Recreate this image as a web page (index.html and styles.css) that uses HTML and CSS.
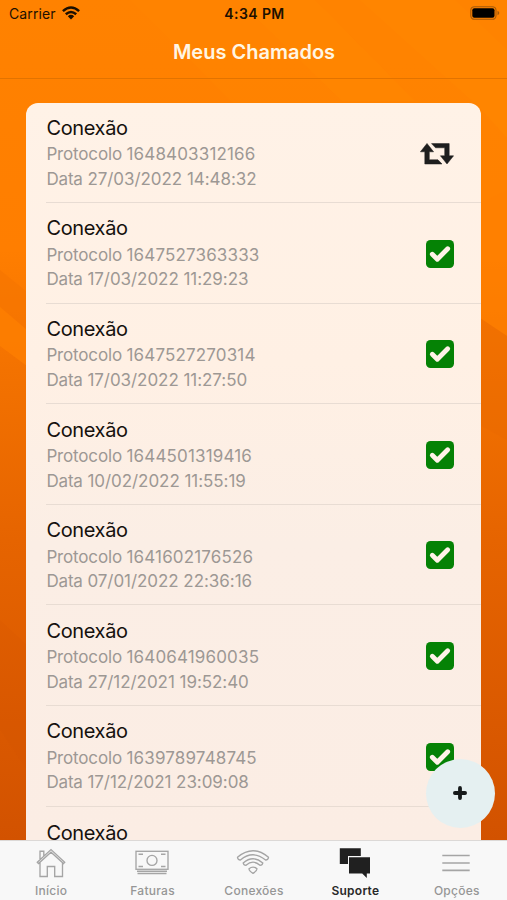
FILE: index.html
```html
<!DOCTYPE html>
<html lang="pt-BR">
<head>
<meta charset="utf-8">
<title>Meus Chamados</title>
<link rel="stylesheet" href="styles.css">
</head>
<body>
<svg width="0" height="0" class="defs">
  <symbol id="check" viewBox="0 0 28 28"><rect width="28" height="28" rx="4.5" fill="#058205"/><path d="M6.3 14.2l5 5 10.4-10.4" fill="none" stroke="#fff3e8" stroke-width="4.8" stroke-linecap="round" stroke-linejoin="round"/></symbol>
</svg>
<div class="app">
  <svg class="backdrop" viewBox="0 0 507 840">
    <path d="M130 0L390 260H507V0Z" fill="#ff8800" opacity=".35"/>
    <path d="M238 0L315 0L415 101H342Z" fill="#ff8a00" opacity=".4"/>
    <path d="M360 0H455L507 50V138L480 108Z" fill="#ff8a00" opacity=".4"/>
    <path d="M480 204L507 190V336L480 318Z" fill="#ff8000" opacity=".6"/>
    <path d="M0 270L27 292V366L0 346Z" fill="#f57500" opacity=".6"/>
    <path d="M0 307L27 330V366L0 346Z" fill="#ff8000" opacity=".7"/>
    <path d="M480 318L507 336V440L480 425Z" fill="#e96900" opacity=".4"/>
    <path d="M0 620L27 645V770L0 730Z" fill="#cf5200" opacity=".1"/>
  </svg>
  <header class="status">
    <div class="carrier">Carrier
      <svg width="18" height="14" viewBox="0 0 18 14" fill="none" stroke="#1c1000" stroke-width="2.5"><path d="M.9 5.1Q9-2.2 17.1 5.1M3.8 8.2Q9 3.7 14.2 8.2"/><path d="M5.8 10.2Q9 7.4 12.2 10.2L9 13.4Z" fill="#1c1000" stroke="none"/></svg>
    </div>
    <div class="clock">4:34 PM</div>
    <svg class="battery" width="30" height="14" viewBox="0 0 30 14"><rect x=".8" y=".7" width="25.2" height="12.6" rx="3.6" fill="none" stroke="#a65a0a" stroke-width="1.1"/><rect x="2.3" y="2.2" width="22.2" height="9.6" rx="2" fill="#000"/><path d="M27.5 4.8Q29.3 5.5 29.3 7T27.5 9.2Z" fill="#a65a0a"/></svg>
  </header>
  <h1 class="title"><span>Meus Chamados</span></h1>
  <main class="list">
    <article class="ticket"><div><h2>Conexão</h2><p>Protocolo <b>1648403312166</b></p><p>Data <i>27/03/2022 14:48:32</i></p></div>
      <svg class="retweet" width="34" height="22" viewBox="0 0 34 22" fill="#1e1e1e" stroke="#1e1e1e" stroke-width=".5" stroke-linejoin="round"><path d="M7 .4L13.6 8.8H9.3V16.8H18L22 21H4.8V8.8H.4Z"/><path d="M27 21L20.4 12.8H24.7V4.8H15.5L11.5 .6H29.2V12.8H33.6Z"/></svg></article>
    <article class="ticket"><div><h2>Conexão</h2><p>Protocolo <b>1647527363333</b></p><p>Data <i>17/03/2022 11:29:23</i></p></div><svg class="check"><use href="#check"/></svg></article>
    <article class="ticket"><div><h2>Conexão</h2><p>Protocolo <b>1647527270314</b></p><p>Data <i>17/03/2022 11:27:50</i></p></div><svg class="check"><use href="#check"/></svg></article>
    <article class="ticket"><div><h2>Conexão</h2><p>Protocolo <b>1644501319416</b></p><p>Data <i>10/02/2022 11:55:19</i></p></div><svg class="check"><use href="#check"/></svg></article>
    <article class="ticket"><div><h2>Conexão</h2><p>Protocolo <b>1641602176526</b></p><p>Data <i>07/01/2022 22:36:16</i></p></div><svg class="check"><use href="#check"/></svg></article>
    <article class="ticket"><div><h2>Conexão</h2><p>Protocolo <b>1640641960035</b></p><p>Data <i>27/12/2021 19:52:40</i></p></div><svg class="check"><use href="#check"/></svg></article>
    <article class="ticket"><div><h2>Conexão</h2><p>Protocolo <b>1639789748745</b></p><p>Data <i>17/12/2021 23:09:08</i></p></div><svg class="check"><use href="#check"/></svg></article>
    <article class="ticket"><div><h2>Conexão</h2></div></article>
  </main>
  <button class="fab" aria-label="Novo chamado"><svg width="14" height="14" viewBox="0 0 14 14" stroke="#161a1b" stroke-width="3.8" stroke-linecap="round"><path d="M7 1.9V12.1M1.9 7H12.1"/></svg></button>
  <nav class="tabs">
    <a class="tab"><svg width="34" height="32" viewBox="0 0 34 32"><path d="M3.3 14.2L17 1.6 30.7 14.2 29.5 15.5 17 4.2 4.5 15.5ZM6 14.3V28.5H13.3V18.5H20.7V28.5H28.5V14.3M6 11V3.2H9.8V8"/></svg><span>Início</span></a>
    <a class="tab"><svg width="34" height="32" viewBox="0 0 34 32"><rect x="1" y="3.3" width="32" height="18"/><circle cx="17" cy="12.4" r="5"/><path d="M3.5 6.2H8M26 6.2H30.5M3.5 18.5H8M26 18.5H30.5M2 23.2H32M2.5 25.5H31.5"/></svg><span>Faturas</span></a>
    <a class="tab"><svg width="34" height="32" viewBox="0 0 34 32"><path d="M1.5 9.2Q17-3.8 32.5 9.2Q32.2 12 29.6 12Q17 1.6 4.4 12Q1.8 12 1.5 9.2ZM7.2 15Q17 6.5 26.8 15Q26.4 17.3 24 17.3Q17 11 10 17.3Q7.6 17.3 7.2 15ZM13 20.8Q17 17.5 21 20.8Q21 23 17 25.3Q13 23 13 20.8Z"/></svg><span>Conexões</span></a>
    <a class="tab active"><svg width="34" height="32" viewBox="0 0 34 32"><path d="M1.8 .2H22.8V8H10V16H1.8Z"/><path d="M11 9.2H32V25.5H28.8V30L24.2 25.5H11Z"/></svg><span>Suporte</span></a>
    <a class="tab"><svg width="34" height="32" viewBox="0 0 34 32"><path stroke-width="1.6" d="M3.3 7.5H30.7M3.3 15H30.7M3.3 22.4H30.7"/></svg><span>Opções</span></a>
  </nav>
</div>
</body>
</html>
```

FILE: styles.css
```css
* { box-sizing: border-box; }
body { margin: 0; font-family: Inter, "Liberation Sans", sans-serif; }
h1, h2, p { margin: 0; font-weight: 400; }
.defs { position: absolute; }
.app {
  position: relative;
  display: flex;
  flex-direction: column;
  width: 507px;
  height: 900px;
  overflow: hidden;
  background: linear-gradient(#ff8200 0, #ff7e00 250px, #f37200 370px, #e66400 540px, #d95800 740px, #d25200 840px);
}
.backdrop { position: absolute; left: 0; top: 0; width: 507px; height: 840px; }
.status {
  position: relative;
  display: grid;
  grid-template-columns: 1fr auto 1fr;
  align-items: center;
  height: 27px;
  padding: 0 7px 0 9px;
  color: #1c1000;
  font-size: 14px;
}
.carrier { display: flex; align-items: center; gap: 6px; letter-spacing: .1px; }
.carrier svg { margin-top: -2px; }
.clock { font-weight: 600; font-size: 14px; letter-spacing: .4px; }
.battery { justify-self: end; margin-top: -1px; }
.title {
  position: relative;
  display: flex;
  align-items: center;
  justify-content: center;
  height: 52px;
  padding: 0 0 2px 1px;
  border-bottom: 1px solid #e27300;
  color: #fff6e4;
  font-size: 20px;
  font-weight: 600;
}
.list {
  position: relative;
  flex: 1;
  min-height: 0;
  margin: 23.5px 26px 0 26.4px;
  overflow: hidden;
  border-radius: 12px 12px 0 0;
  background: linear-gradient(#fff2e7, #fff0e4 35%, #fbeee5 60%, #fbede4);
}
.ticket {
  position: relative;
  display: flex;
  align-items: center;
  justify-content: space-between;
  height: 100.6px;
  margin-left: 20px;
  padding: 1.4px 27px 0 0;
  border-bottom: 1px solid #e8dcd3;
}
.ticket:last-child { align-items: flex-start; padding-top: 13px; }
.ticket h2 { color: #15110e; font-size: 20px; line-height: 27px; letter-spacing: -.35px; }
.ticket p { margin-top: .4px; color: #9d9894; font-size: 17px; line-height: 24.2px; letter-spacing: -.16px; }
.ticket b { font-weight: 400; letter-spacing: .15px; }
.ticket i { font-style: normal; letter-spacing: -.05px; }
.retweet { margin: 2px .5px 0 0; }
.check { width: 28px; height: 28px; }
.fab {
  position: absolute;
  left: 426px;
  top: 759px;
  display: grid;
  place-items: center;
  width: 69px;
  height: 69px;
  padding: 0 1px 1px 0;
  border: 0;
  border-radius: 50%;
  background: #e5f0f1;
}
.tabs {
  position: relative;
  display: grid;
  grid-template-columns: repeat(5, 1fr);
  height: 60px;
  border-top: 1px solid #dcd9d7;
  background: #f8f8f8;
}
.tab {
  display: flex;
  flex-direction: column;
  align-items: center;
  padding-top: 7px;
  color: #969696;
  font-size: 12px;
  font-weight: 500;
  line-height: 16px;
  letter-spacing: .25px;
}
.tab span { margin: 3px 0 0 1px; }
.tab svg { fill: none; stroke: #a5a5a5; stroke-width: 1.35; }
.tab.active { color: #292929; font-weight: 600; }
.tab.active svg { fill: #202020; stroke: none; }
```
